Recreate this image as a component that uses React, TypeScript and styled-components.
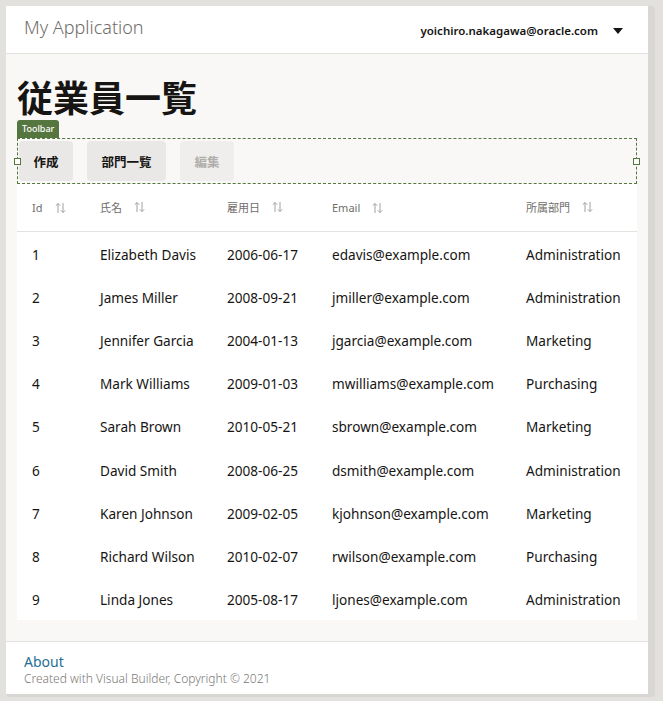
import styled, { createGlobalStyle } from "styled-components";

const GlobalStyle = createGlobalStyle`
	html, body {
		margin: 0;
		padding: 0;
		background: #e3e1dd;
	}
	body {
		font-family: "Noto Sans", "Noto Sans CJK JP", sans-serif;
		color: #161513;
	}
`;

const Frame = styled.div`
	padding: 6px 8px 0 6px;
`;

const Shadow = styled.div`
	background: #d9d7d3;
	border-radius: 4px;
	padding: 0 7px 3px 0;
	width: 642px;
`;

const Card = styled.div`
	width: 642px;
	height: 688px;
	display: flex;
	flex-direction: column;
	background: #f9f8f6;
`;

const Header = styled.header`
	height: 47px;
	background: #fff;
	border-bottom: 1px solid #e4e2de;
	display: flex;
	align-items: center;
	justify-content: space-between;
	padding: 0 25px 0 18px;
	box-sizing: content-box;
	flex-shrink: 0;
`;

const AppName = styled.div`
	font-size: 18px;
	font-weight: 300;
	color: #6f6d6a;
	margin-top: -6px;
`;

const UserMenu = styled.div`
	display: flex;
	align-items: center;
	gap: 15px;
	font-size: 11.5px;
	font-weight: 600;
	color: #161513;
	margin-top: 2px;
`;

const Caret = styled.span`
	width: 0;
	height: 0;
	border-left: 5px solid transparent;
	border-right: 5px solid transparent;
	border-top: 6px solid #161513;
`;

const Main = styled.main`
	flex: 1;
	padding: 24px 11px 0 11px;
`;

const Title = styled.h1`
	margin: 0;
	font-size: 36px;
	line-height: 42px;
	font-weight: 700;
	letter-spacing: 0;
`;

const ToolbarTag = styled.div`
	width: fit-content;
	background: #56763f;
	color: #fff;
	font-size: 9px;
	font-weight: 500;
	line-height: 18px;
	padding: 0 5px;
	border-radius: 3px 3px 0 0;
`;

const Toolbar = styled.div`
	position: relative;
	border: 1px dashed #56763f;
	height: 46px;
	box-sizing: border-box;
	display: flex;
	align-items: center;
	gap: 14px;
	padding: 0 0 0 1px;
`;

const Handle = styled.span<{ $side: "left" | "right" }>`
	position: absolute;
	top: 19px;
	${(p) => (p.$side === "left" ? "left: -4px;" : "right: -4px;")}
	width: 5px;
	height: 5px;
	background: #fff;
	border: 1px solid #56763f;
`;

const Button = styled.button<{ $disabled?: boolean }>`
	height: 40px;
	border: none;
	border-radius: 4px;
	padding: 0 14.5px;
	font-family: inherit;
	font-size: 12.5px;
	font-weight: 700;
	background: ${(p) => (p.$disabled ? "#efeeec" : "#e9e8e6")};
	color: ${(p) => (p.$disabled ? "#b0aeab" : "#161513")};
	cursor: ${(p) => (p.$disabled ? "default" : "pointer")};
`;

const Table = styled.table`
	width: 100%;
	background: #fff;
	border-collapse: collapse;
	table-layout: fixed;
`;

const Th = styled.th`
	text-align: left;
	font-weight: 400;
	font-size: 11px;
	color: #6f6d6a;
	height: 47px;
	padding: 0 0 0 15px;
	border-bottom: 1px solid #e4e2de;
`;

const ThInner = styled.span`
	display: inline-flex;
	align-items: center;
	gap: 12px;
	margin-top: -2px;
`;

const Td = styled.td`
	font-size: 13.6px;
	color: #161513;
	height: 43.2px;
	padding: 2px 0 0 15px;
	box-sizing: border-box;
	white-space: nowrap;
`;

const SortIcon = () => (
	<svg width="11" height="12" viewBox="0 0 11 12" fill="none" stroke="#a3a19e" strokeWidth="1">
		<path d="M3 11V1.5M0.8 3.7L3 1.5l2.2 2.2" />
		<path d="M8 1v9.5M5.8 8.3L8 10.5l2.2-2.2" />
	</svg>
);

const Footer = styled.footer`
	margin-top: auto;
	height: 53px;
	background: #fff;
	border-top: 1px solid #e4e2de;
	padding: 11px 18px 0;
	box-sizing: border-box;
	flex-shrink: 0;
`;

const About = styled.a`
	display: block;
	font-size: 14px;
	line-height: 17px;
	color: #1f6f95;
	text-decoration: none;
`;

const Copyright = styled.div`
	font-size: 12px;
	line-height: 18px;
	color: #7a7875;
	font-weight: 300;
`;

const columns = [
	{ label: "Id", width: 68 },
	{ label: "氏名", width: 127 },
	{ label: "雇用日", width: 105 },
	{ label: "Email", width: 194 },
	{ label: "所属部門", width: 126 },
];

const employees = [
	[1, "Elizabeth Davis", "2006-06-17", "edavis@example.com", "Administration"],
	[2, "James Miller", "2008-09-21", "jmiller@example.com", "Administration"],
	[3, "Jennifer Garcia", "2004-01-13", "jgarcia@example.com", "Marketing"],
	[4, "Mark Williams", "2009-01-03", "mwilliams@example.com", "Purchasing"],
	[5, "Sarah Brown", "2010-05-21", "sbrown@example.com", "Marketing"],
	[6, "David Smith", "2008-06-25", "dsmith@example.com", "Administration"],
	[7, "Karen Johnson", "2009-02-05", "kjohnson@example.com", "Marketing"],
	[8, "Richard Wilson", "2010-02-07", "rwilson@example.com", "Purchasing"],
	[9, "Linda Jones", "2005-08-17", "ljones@example.com", "Administration"],
];

const App = () => {
	return (
		<>
			<GlobalStyle />
			<Frame>
				<Shadow>
					<Card>
						<Header>
							<AppName>My Application</AppName>
							<UserMenu>
								yoichiro.nakagawa@oracle.com
								<Caret />
							</UserMenu>
						</Header>

						<Main>
							<Title>従業員一覧</Title>
							<ToolbarTag>Toolbar</ToolbarTag>
							<Toolbar>
								<Handle $side="left" />
								<Button>作成</Button>
								<Button>部門一覧</Button>
								<Button $disabled>編集</Button>
								<Handle $side="right" />
							</Toolbar>

							<Table>
								<colgroup>
									{columns.map((c) => (
										<col key={c.label} style={{ width: c.width }} />
									))}
								</colgroup>
								<thead>
									<tr>
										{columns.map((c) => (
											<Th key={c.label}>
												<ThInner>
													{c.label}
													<SortIcon />
												</ThInner>
											</Th>
										))}
									</tr>
								</thead>
								<tbody>
									{employees.map((row) => (
										<tr key={row[0]}>
											{row.map((cell, i) => (
												<Td key={i}>{cell}</Td>
											))}
										</tr>
									))}
								</tbody>
							</Table>
						</Main>

						<Footer>
							<About href="#">About</About>
							<Copyright>Created with Visual Builder, Copyright © 2021</Copyright>
						</Footer>
					</Card>
				</Shadow>
			</Frame>
		</>
	);
};

export default App;
